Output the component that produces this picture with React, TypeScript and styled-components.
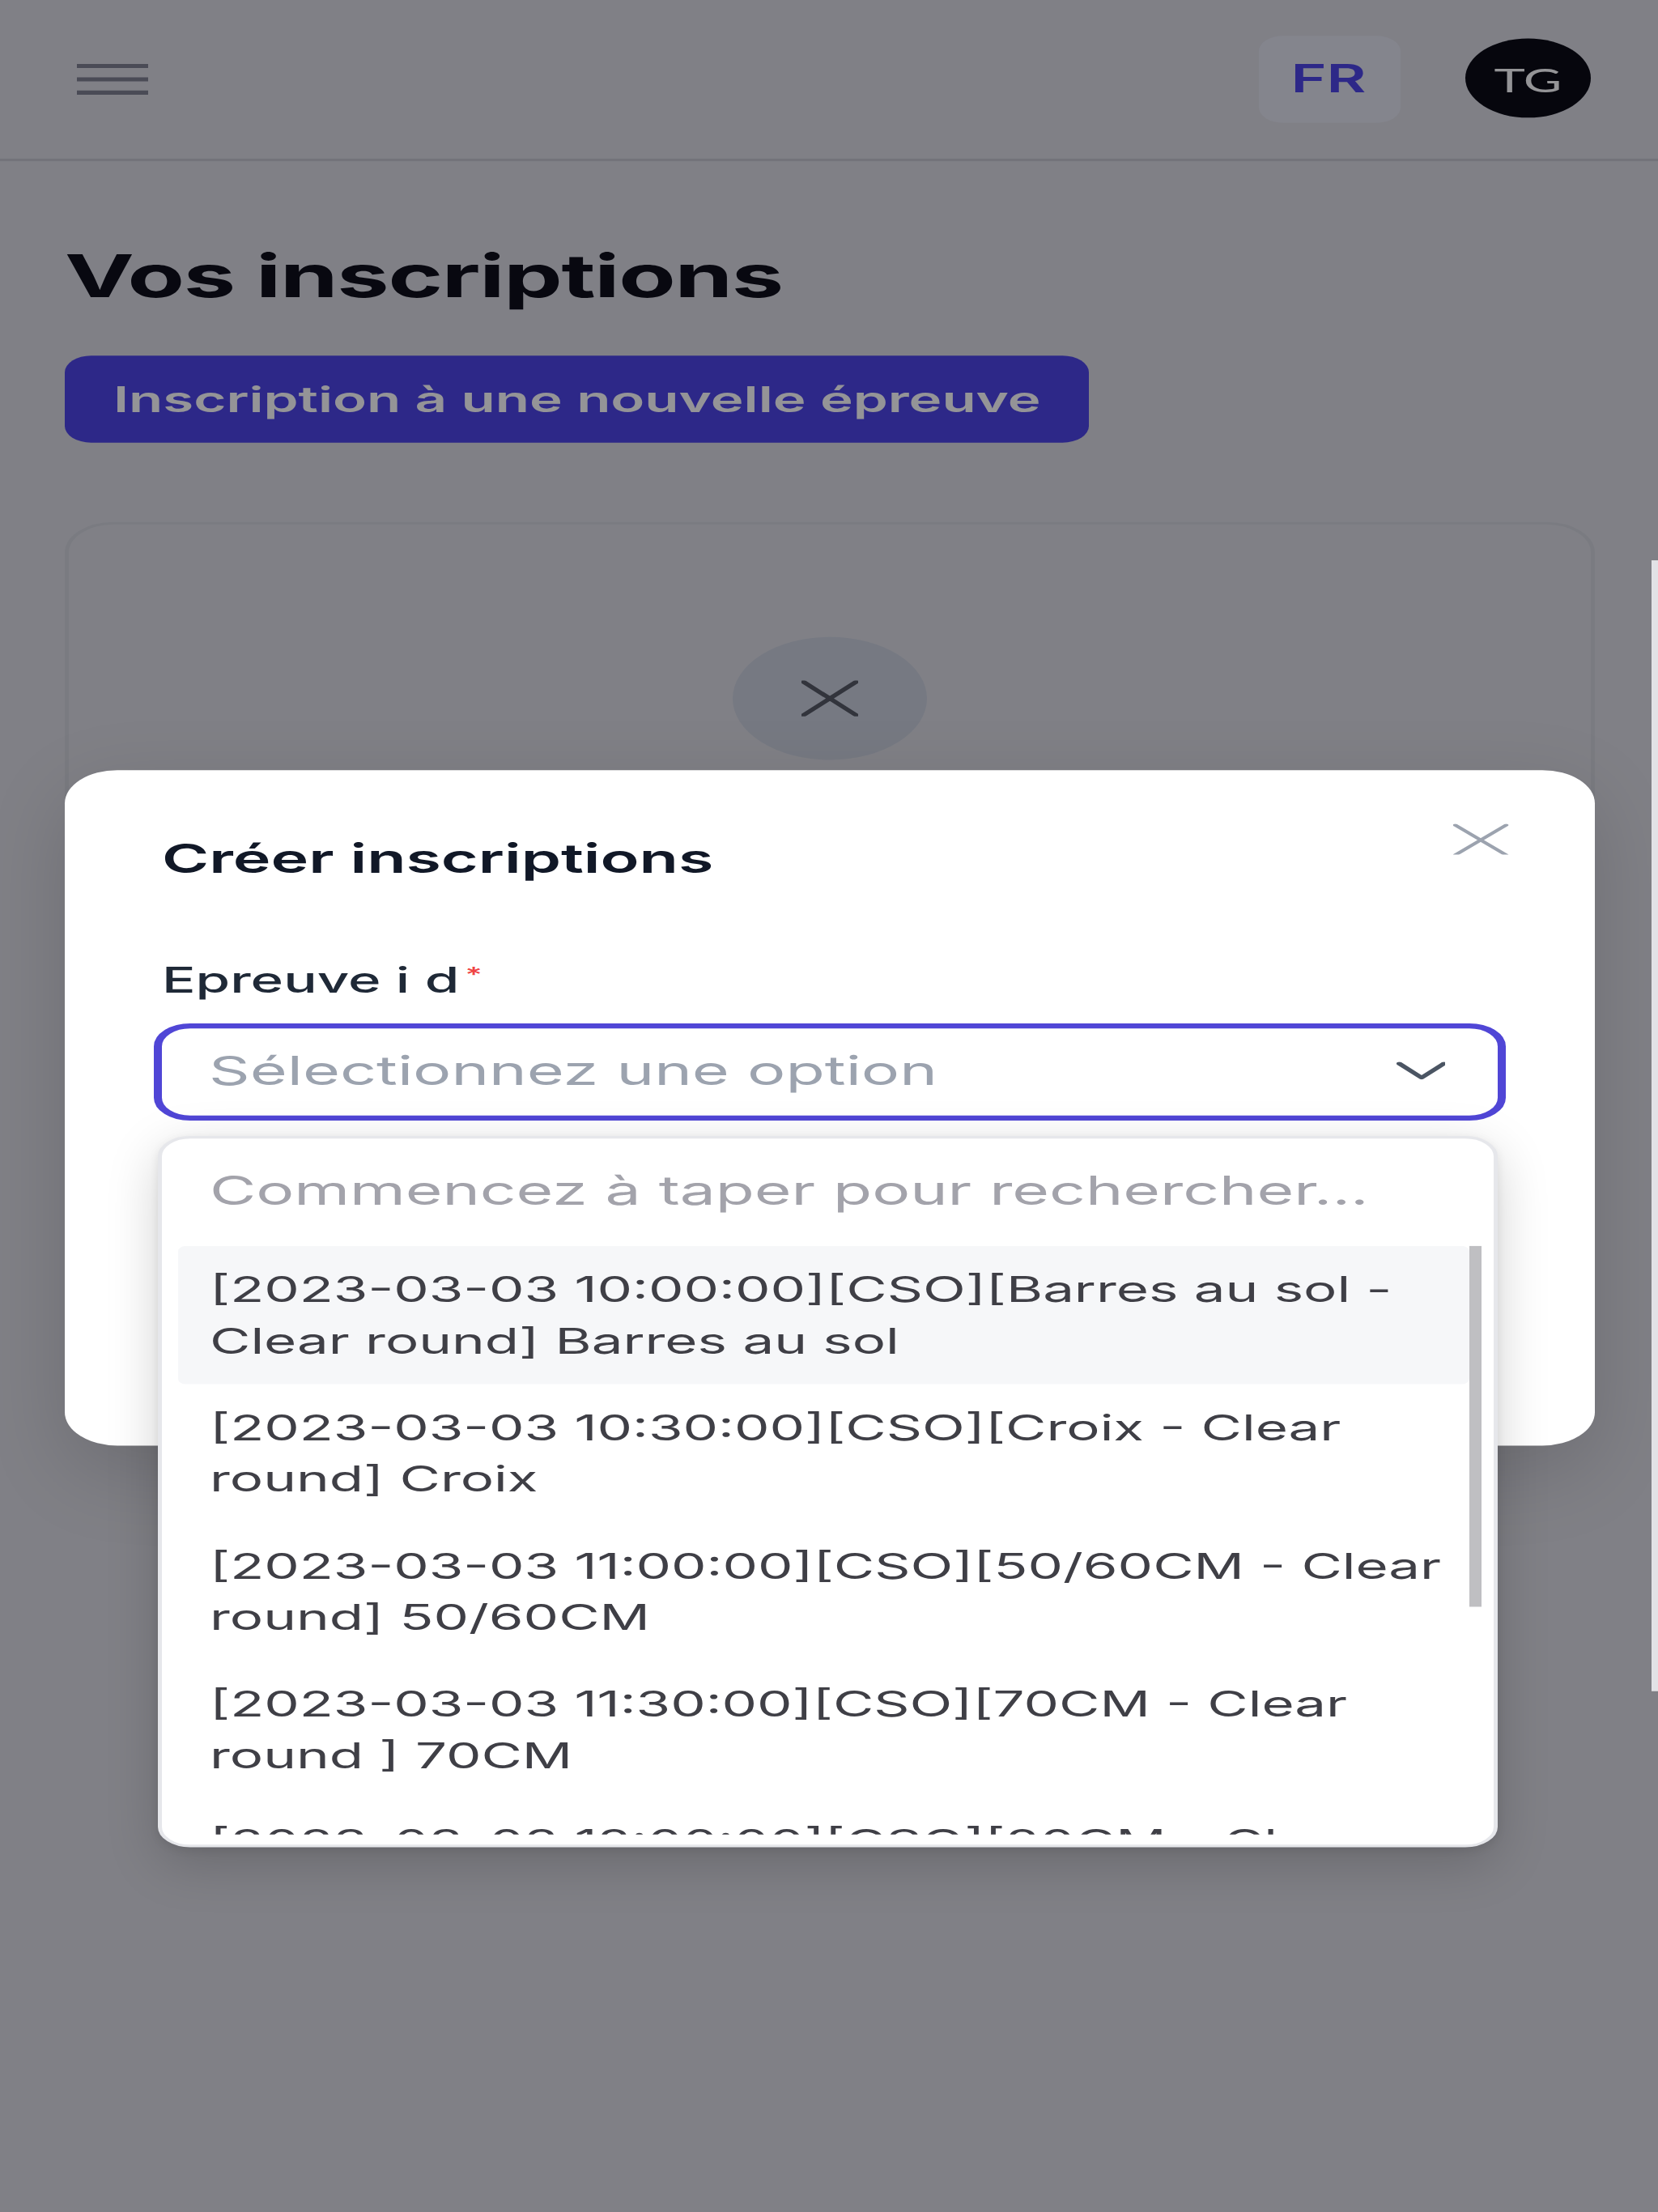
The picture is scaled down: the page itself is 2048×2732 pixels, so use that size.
import React from "react";
import styled, { createGlobalStyle } from "styled-components";

/* The reference is a phone screenshot stretched to 2048x2732: the page is laid out
   in the phone's own CSS pixels and the whole stage is scaled to the picture. */
const SX = 5;
const SY = 3.16;
const STAGE_W = 2048 / SX;
const STAGE_H = 2732 / SY;

const GlobalStyle = createGlobalStyle`
  html, body {
    margin: 0;
    padding: 0;
    background: #7f8086;
    overflow: hidden;
  }
  * { box-sizing: border-box; }
`;

const Frame = styled.div`
  position: relative;
  width: 2048px;
  height: 2732px;
  overflow: hidden;
`;

const Stage = styled.div`
  position: relative;
  width: ${STAGE_W}px;
  height: ${STAGE_H}px;
  transform: scale(${SX}, ${SY});
  transform-origin: 0 0;
  overflow: hidden;
  background: #dcdde2;
  font-family: Inter, "Noto Sans", sans-serif;
`;

/* ---------- header ---------- */
const Header = styled.header`
  height: 63px;
  display: flex;
  align-items: center;
  justify-content: space-between;
  padding: 0 16.6px 0 19.2px;
  border-bottom: 1px solid #c6c7cd;
`;

const MenuButton = styled.button`
  display: flex;
  padding: 0;
  border: none;
  background: transparent;
  color: #80828f;
`;

const HeaderActions = styled.div`
  display: flex;
  align-items: center;
  gap: 16.4px;
`;

const LangButton = styled.button`
  width: 34.8px;
  height: 34.3px;
  border: none;
  border-radius: 6px;
  background: #e4e5ee;
  color: #4f46e5;
  font-family: Inter, sans-serif;
  font-size: 15px;
  font-weight: 600;
  display: flex;
  align-items: center;
  justify-content: center;
  padding: 0;
`;

const Avatar = styled.div`
  width: 31px;
  height: 31px;
  border-radius: 50%;
  background: #0b0b12;
  color: #ffffff;
  font-family: Lato, "Open Sans", sans-serif;
  font-size: 13px;
  display: flex;
  align-items: center;
  justify-content: center;
`;

/* ---------- page content ---------- */
const Main = styled.main`
  padding: 31px 16px 0;
`;

const PageTitle = styled.h1`
  margin: 0;
  font-size: 23px;
  line-height: 28px;
  font-weight: 700;
  letter-spacing: -0.25px;
  color: #0f0f17;
`;

const PrimaryButton = styled.button`
  margin-top: 16.7px;
  height: 34.6px;
  padding: 0 12px;
  border: none;
  border-radius: 6.5px;
  background: #4f46e5;
  color: #ffffff;
  font-family: Inter, sans-serif;
  font-size: 13.8px;
  font-weight: 600;
  display: inline-flex;
  align-items: center;
`;

const EmptyCard = styled.section`
  margin-top: 31px;
  height: 340px;
  border: 1px solid #d3d5da;
  border-radius: 12px;
  padding-top: 43.4px;
  display: flex;
  flex-direction: column;
  align-items: center;
`;

const EmptyIcon = styled.div`
  width: 48px;
  height: 48px;
  border-radius: 50%;
  background: #cbd0db;
  color: #565a62;
  display: flex;
  align-items: center;
  justify-content: center;
`;

/* ---------- modal ---------- */
const Overlay = styled.div`
  position: absolute;
  inset: 0;
  background: rgba(0, 0, 8, 0.42);
  padding: 301.2px 16px 0;
`;

const Modal = styled.div`
  background: #ffffff;
  border-radius: 13px;
  padding: 24px 24px 127.6px;
  box-shadow: 0 10px 25px rgba(0, 0, 0, 0.15);
`;

const ModalHeader = styled.div`
  display: flex;
  justify-content: space-between;
  align-items: flex-start;
`;

const ModalTitle = styled.h2`
  margin: 0;
  font-size: 15.8px;
  line-height: 21px;
  font-weight: 600;
  color: #111827;
`;

const CloseButton = styled.button`
  margin: -3.4px -3px 0 0;
  padding: 0;
  border: none;
  background: transparent;
  color: #9ca3af;
  display: flex;
`;

const Field = styled.div`
  margin-top: 28px;
`;

const Label = styled.label`
  display: block;
  font-size: 13.8px;
  line-height: 18px;
  font-weight: 500;
  color: #1f2937;
`;

const Required = styled.span`
  position: relative;
  top: -4px;
  margin-left: 1.5px;
  font-size: 8px;
  color: #ef4444;
`;

const SelectWrap = styled.div`
  position: relative;
  margin: 5.6px -2px 0 -2.4px;
`;

const SelectBox = styled.div`
  height: 37.9px;
  border: 2px solid #5046d6;
  border-radius: 9px;
  padding: 0 12.5px 0 12px;
  display: flex;
  align-items: center;
  justify-content: space-between;
  background: #ffffff;
`;

const Placeholder = styled.span`
  font-size: 15.8px;
  color: #9ca3af;
`;

const Chevron = styled.span`
  display: flex;
  color: #4b5563;
`;

const Dropdown = styled.div`
  position: absolute;
  top: calc(100% + 6px);
  left: 1.6px;
  right: 1.2px;
  z-index: 10;
  background: #ffffff;
  border: 1px solid #e6e7eb;
  border-radius: 8px;
  overflow: hidden;
  box-shadow: 0 6px 16px rgba(0, 0, 0, 0.18), 0 1px 3px rgba(0, 0, 0, 0.08);
`;

const SearchInput = styled.input`
  display: block;
  width: 100%;
  height: 42.5px;
  border: none;
  outline: none;
  padding: 0 11.6px;
  font-family: Inter, sans-serif;
  font-size: 15.7px;
  color: #111827;
  background: transparent;

  &::placeholder {
    color: #a3a3ab;
  }
`;

const ListArea = styled.div`
  display: flex;
  margin: 0 3.2px 4px 4px;
  height: 230px;
`;

const OptionList = styled.ul`
  flex: 1;
  list-style: none;
  margin: 0;
  padding: 0;
  overflow: hidden;
`;

const ScrollTrack = styled.div`
  width: 3px;
  flex-shrink: 0;
`;

const ScrollThumb = styled.div`
  height: 141px;
  background: #bfbfc2;
`;

const OptionItem = styled.li<{ $active?: boolean }>`
  padding: 7px 4px 7px 7.6px;
  font-size: 13.8px;
  line-height: 20px;
  color: #3f3f46;
  white-space: nowrap;
  border-radius: 2px;
  background: ${(p) => (p.$active ? "#f6f7f9" : "transparent")};
`;

const OptionLine = styled.span`
  display: block;
`;

const PageScrollbar = styled.div`
  position: absolute;
  top: 219px;
  right: 0;
  width: 1.3px;
  height: 442px;
  background: #e2e2e6;
  z-index: 20;
`;

const options: [string, string][] = [
  ["[2023-03-03 10:00:00][CSO][Barres au sol -", "Clear round] Barres au sol"],
  ["[2023-03-03 10:30:00][CSO][Croix - Clear", "round] Croix"],
  ["[2023-03-03 11:00:00][CSO][50/60CM - Clear", "round] 50/60CM"],
  ["[2023-03-03 11:30:00][CSO][70CM - Clear", "round ] 70CM"],
  ["[2023-03-03 12:00:00][CSO][80CM - Clear", "round] 80CM"],
];

const MenuIcon = () => (
  <svg width="17.6" height="12" viewBox="0 0 17.6 12" fill="none">
    <path d="M0 0.8H17.6M0 6H17.6M0 11.2H17.6" stroke="currentColor" strokeWidth="1.6" />
  </svg>
);

const XIcon = ({ w, h, sw }: { w: number; h: number; sw: number }) => (
  <svg width={w} height={h} viewBox={`0 0 ${w} ${h}`} fill="none">
    <path d={`M0.5 0.5L${w - 0.5} ${h - 0.5}M${w - 0.5} 0.5L0.5 ${h - 0.5}`} stroke="currentColor" strokeWidth={sw} strokeLinecap="round" />
  </svg>
);

const ChevronIcon = () => (
  <svg width="12.4" height="7" viewBox="0 0 12.4 7" fill="none">
    <path d="M0.7 0.7L6.2 6.2L11.7 0.7" stroke="currentColor" strokeWidth="1.4" strokeLinecap="round" strokeLinejoin="round" />
  </svg>
);

export default function App() {
  return (
    <>
      <GlobalStyle />
      <Frame>
        <Stage>
          <Header>
            <MenuButton aria-label="Menu">
              <MenuIcon />
            </MenuButton>
            <HeaderActions>
              <LangButton>FR</LangButton>
              <Avatar>TG</Avatar>
            </HeaderActions>
          </Header>

          <Main>
            <PageTitle>Vos inscriptions</PageTitle>
            <PrimaryButton>Inscription à une nouvelle épreuve</PrimaryButton>
            <EmptyCard>
              <EmptyIcon>
                <XIcon w={14} h={14} sw={1.4} />
              </EmptyIcon>
            </EmptyCard>
          </Main>

          <Overlay>
            <Modal>
              <ModalHeader>
                <ModalTitle>Créer inscriptions</ModalTitle>
                <CloseButton aria-label="Fermer">
                  <XIcon w={13.6} h={12.7} sw={1.1} />
                </CloseButton>
              </ModalHeader>
              <Field>
                <Label>
                  Epreuve i d<Required>*</Required>
                </Label>
                <SelectWrap>
                  <SelectBox>
                    <Placeholder>Sélectionnez une option</Placeholder>
                    <Chevron>
                      <ChevronIcon />
                    </Chevron>
                  </SelectBox>
                  <Dropdown>
                    <SearchInput placeholder="Commencez à taper pour rechercher..." />
                    <ListArea>
                      <OptionList>
                        {options.map(([a, b], i) => (
                          <OptionItem key={a} $active={i === 0}>
                            <OptionLine>{a}</OptionLine>
                            <OptionLine>{b}</OptionLine>
                          </OptionItem>
                        ))}
                      </OptionList>
                      <ScrollTrack>
                        <ScrollThumb />
                      </ScrollTrack>
                    </ListArea>
                  </Dropdown>
                </SelectWrap>
              </Field>
            </Modal>
          </Overlay>
          <PageScrollbar />
        </Stage>
      </Frame>
    </>
  );
}
